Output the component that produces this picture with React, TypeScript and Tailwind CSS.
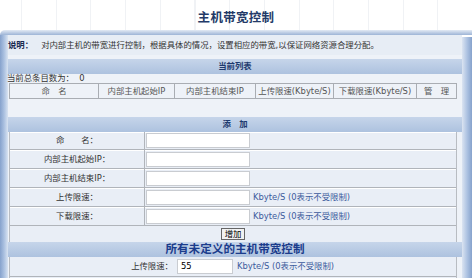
const font = "font-['DejaVu_Sans','Noto_Sans_CJK_SC',sans-serif]";

const listCols = [
  { label: "命　名", w: "w-[89px]" },
  { label: "内部主机起始IP", w: "w-[76px]" },
  { label: "内部主机结束IP", w: "w-[81px]" },
  { label: "上传限速(Kbyte/S)", w: "w-[78px]" },
  { label: "下载限速(Kbyte/S)", w: "w-[83px]" },
  { label: "管　理", w: "flex-1" },
];

const formRows = [
  { label: "命　　名：", unit: false },
  { label: "内部主机起始IP：", unit: false },
  { label: "内部主机结束IP：", unit: false },
  { label: "上传限速：", unit: true },
  { label: "下载限速：", unit: true },
];

function Bar({ title, big }: { title: string; big?: boolean }) {
  return (
    <div className="h-[15px] flex items-center justify-center bg-gradient-to-b from-[#c6d5ea] to-[#adc2df]">
      <span
        className={
          big
            ? "text-[11.6px] leading-none font-bold text-[#1b3c8c]"
            : "text-[8.4px] leading-none font-bold text-[#1e3a6e]"
        }
      >
        {title}
      </span>
    </div>
  );
}

export default function App() {
  return (
    <div className={`w-[472px] h-[278px] overflow-hidden bg-white ${font}`}>
      {/* Header */}
      <div className="h-[30px] flex items-center justify-center bg-[repeating-linear-gradient(90deg,#fff_0px,#fff_21px,#f0f2f5_21px,#f0f2f5_22px,#fff_22px,#fff_34.7px)]">
        <h1 className="text-[12.5px] leading-none font-bold text-[#233a68] tracking-[0.3px] mt-[6px]">主机带宽控制</h1>
      </div>

      {/* top band */}
      <div className="h-[5px] rounded-tl-[6px] bg-gradient-to-b from-[#e3eaf4] to-[#9db4d6]" />

      <div className="flex h-[243px]">
        {/* left frame */}
        <div className="w-[8px] bg-gradient-to-r from-[#86a2cc] via-[#aac0e0] to-[#d8e3f1]" />

        {/* content */}
        <div className="w-[454px] bg-[#eef2f8] text-[8.4px] leading-none text-[#333]">
          {/* description */}
          <div className="h-[20px] flex items-center bg-[#e7edf5]">
            <span className="font-bold text-[#1a2a50]">说明：</span>
            <span className="ml-[8px]">对内部主机的带宽进行控制，根据具体的情况，设置相应的带宽,以保证网络资源合理分配。</span>
          </div>
          <div className="h-[4px]" />

          <Bar title="当前列表" />
          <div className="h-[9px] flex items-center -ml-[1px]">当前总条目数为：&nbsp;&nbsp;0</div>

          {/* list header */}
          <div className="ml-[1px] w-[448px] h-[16px] flex border-y border-[#a9adb3] border-l text-[#555]">
            {listCols.map((c) => (
              <div
                key={c.label}
                className={`${c.w} flex items-center justify-center border-r border-[#a9adb3]`}
              >
                {c.label}
              </div>
            ))}
          </div>
          <div className="h-[18px]" />

          <Bar title="添　加" />

          {/* add form */}
          <div className="ml-[1px] w-[448px] border-l border-r border-[#b8bcc2] bg-[#e9eef6]">
            {formRows.map((r, i) => (
              <div
                key={r.label}
                className={`${i === 0 ? "h-[18px]" : "h-[19px]"} flex border-b border-[#b0b4ba] shadow-[inset_0_1px_0_#fff]`}
              >
                <div className="w-[135px] flex items-center justify-center border-r border-[#b0b4ba]">
                  {r.label}
                </div>
                <div className="flex-1 flex items-center">
                  <div className="ml-[1px] w-[104px] h-[15px] bg-white border border-[#c9ccd1]" />
                  {r.unit && (
                    <span className="ml-[3px] text-[#3c5a9c]">Kbyte/S (0表示不受限制)</span>
                  )}
                </div>
              </div>
            ))}
            <div className="h-[16px] flex items-center justify-center">
              <button className="w-[24px] h-[12px] flex items-center justify-center bg-[#f2f2f2] border border-[#666] text-black text-[8.4px] leading-none">
                增加
              </button>
            </div>
          </div>

          <Bar title="所有未定义的主机带宽控制" big />

          {/* default limits */}
          <div className="ml-[1px] w-[448px] border-l border-r border-[#b8bcc2] bg-[#e9eef6]">
            <div className="h-[20px] flex items-center border-b border-[#b0b4ba]">
              <div className="w-[167px] text-right pr-[4px]">上传限速：</div>
              <div className="w-[56px] h-[15px] bg-white border border-[#c9ccd1] flex items-center pl-[3px] text-black">
                55
              </div>
              <span className="ml-[4px] text-[#3c5a9c]">Kbyte/S (0表示不受限制)</span>
            </div>
            <div className="h-[20px]" />
          </div>
        </div>

        {/* right frame */}
        <div className="w-[10px] mt-[2px] bg-gradient-to-r from-[#dbe4f1] via-[#aec3e2] to-[#86a2cc]" />
      </div>
    </div>
  );
}
